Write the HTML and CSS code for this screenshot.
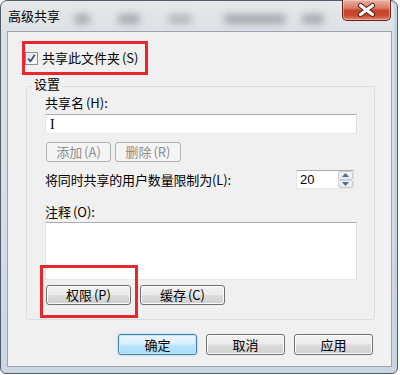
FILE: index.html
```html
<!DOCTYPE html>
<html lang="zh-CN">
<head>
<meta charset="utf-8">
<title>高级共享</title>
<link rel="stylesheet" href="styles.css">
</head>
<body>
<div class="window">
  <div class="titlebar">
    <span class="title">高级共享</span>
    <span class="glass g1"></span>
    <span class="glass g2"></span>
    <span class="glass g3"></span>
    <span class="glass g4"></span>
    <span class="glass g5"></span>
    <button class="close" type="button" aria-label="关闭">
      <svg width="47" height="20" viewBox="0 0 47 20">
        <path d="M17.5 5.5 L29.5 14.5 M29.5 5.5 L17.5 14.5" stroke="#5a2014" stroke-width="5.2" stroke-linecap="round" fill="none"/>
        <path d="M17.5 5.5 L29.5 14.5 M29.5 5.5 L17.5 14.5" stroke="#ffffff" stroke-width="3.2" stroke-linecap="round" fill="none"/>
      </svg>
    </button>
  </div>
  <div class="client">
    <label class="share-check">
      <span class="checkbox">
        <svg width="11" height="11" viewBox="0 0 11 11">
          <path d="M2.2 5.6 L4.4 8.4 L8.8 1.8" stroke="#3b4f8a" stroke-width="1.8" fill="none" stroke-linejoin="round"/>
        </svg>
      </span>
      <span class="check-text">共享此文件夹 (S)</span>
    </label>
    <fieldset class="settings">
      <legend class="settings-title">设置</legend>
      <div class="field-label">共享名 (H):</div>
      <div class="textbox"><span class="share-name">I</span></div>
      <div class="btn-row add-row">
        <button class="btn disabled add" type="button">添加 (A)</button>
        <button class="btn disabled remove" type="button">删除 (R)</button>
      </div>
      <div class="limit-row">
        <span class="limit-label">将同时共享的用户数量限制为(L):</span>
        <div class="spin">
          <span class="spin-value">20</span>
          <div class="spin-btns">
            <span class="spin-btn">
              <svg width="7" height="4" viewBox="0 0 7 4"><path d="M0 4 L3.5 0 L7 4 Z" fill="#4c6a92"/></svg>
            </span>
            <span class="spin-btn">
              <svg width="7" height="4" viewBox="0 0 7 4"><path d="M0 0 L7 0 L3.5 4 Z" fill="#4c6a92"/></svg>
            </span>
          </div>
        </div>
      </div>
      <div class="field-label comment-label">注释 (O):</div>
      <div class="textarea"></div>
      <div class="btn-row perm-row">
        <div class="perm-wrap">
          <button class="btn perm" type="button">权限 (P)</button>
          <span class="annot"></span>
        </div>
        <button class="btn cache" type="button">缓存 (C)</button>
      </div>
    </fieldset>
    <div class="dialog-buttons">
      <button class="btn dlg default" type="button">确定</button>
      <button class="btn dlg" type="button">取消</button>
      <button class="btn dlg" type="button">应用</button>
    </div>
  </div>
</div>
</body>
</html>
```

FILE: styles.css
```css
* {
  box-sizing: border-box;
}

html,
body {
  margin: 0;
  padding: 0;
  background: #ffffff;
}

body {
  width: 400px;
  height: 375px;
  overflow: hidden;
  font-family: "Noto Sans CJK SC", "Microsoft YaHei", "Noto Sans", sans-serif;
  font-size: 13px;
  color: #111111;
}

.window {
  width: 398px;
  height: 374px;
  border: 1px solid #505e6c;
  border-radius: 7px 7px 6px 6px;
  background: linear-gradient(to bottom, #e6e8ea 0, #dde1e5 30px, #d5dde5 60%, #cad6e2 100%);
  padding: 0 5px 6px 6px;
  display: flex;
  flex-direction: column;
  box-shadow: inset -3px 0 0 #c3d3e4;
}

.titlebar {
  height: 30px;
  flex: none;
  display: flex;
  align-items: flex-start;
}

.title {
  line-height: 30px;
  padding-left: 1px;
  color: #000000;
  font-size: 13px;
}

.glass {
  display: block;
  height: 10px;
  margin-top: 13px;
  background: rgba(90, 96, 104, 0.42);
  filter: blur(3.5px);
  border-radius: 4px;
}

.g1 { width: 16px; margin-left: 14px; }
.g2 { width: 22px; margin-left: 28px; }
.g3 { width: 24px; margin-left: 28px; opacity: 0.75; }
.g4 { width: 62px; margin-left: 32px; }
.g5 { width: 22px; margin-left: 16px; }

.close {
  margin-left: auto;
  margin-right: 1px;
  margin-top: -1px;
  width: 49px;
  height: 21px;
  padding: 0;
  border: 1px solid #5e2418;
  border-top: none;
  border-radius: 0 0 5px 5px;
  background: linear-gradient(to bottom, #eab0a3 0%, #dc7c67 40%, #c8432b 52%, #c94a30 78%, #df8a72 100%);
  box-shadow: inset 0 0 0 1px rgba(255, 220, 210, 0.45);
  display: flex;
  align-items: center;
  justify-content: center;
}

.client {
  flex: 1;
  border: 1px solid #98a4b0;
  background: #f0f0f0;
  display: flex;
  flex-direction: column;
  align-items: flex-start;
}

.share-check {
  margin: 9px 0 0 14px;
  width: 126px;
  height: 34px;
  border: 3px solid #e6282e;
  display: flex;
  align-items: center;
  gap: 4px;
  color: #000000;
}

.checkbox {
  width: 13px;
  height: 13px;
  border: 1px solid #8e8f8f;
  background: linear-gradient(135deg, #d9dadb 0%, #f6f6f6 60%, #ffffff 100%);
  box-shadow: inset 0 0 0 1px #f3f3f3;
  display: flex;
  align-items: center;
  justify-content: center;
}

.check-text {
  line-height: 14px;
  white-space: nowrap;
  word-spacing: -1px;
}

.settings {
  align-self: stretch;
  margin: 2px 16px 0 18px;
  border: 1px solid #d5dfe5;
  border-radius: 3px;
  padding: 0 17px 14px 18px;
  min-width: 0;
  display: flex;
  flex-direction: column;
}

.settings-title {
  line-height: 14px;
  padding: 0 2px 5px;
  margin-left: -13px;
  color: #000000;
}

.field-label {
  line-height: 14px;
  color: #000000;
  word-spacing: -1px;
}

.textbox {
  margin-top: 4px;
  height: 20px;
  border: 1px solid;
  border-color: #abadb3 #dbdfe6 #e3e9ef #e2e3ea;
  background: #ffffff;
  padding-left: 4px;
  line-height: 18px;
}

.share-name {
  font-family: "Liberation Serif", "DejaVu Serif", serif;
  font-size: 14px;
  color: #000000;
}

.btn-row {
  display: flex;
}

.add-row {
  margin-top: 8px;
  gap: 4px;
}

.btn {
  height: 20px;
  padding: 0;
  font-family: inherit;
  font-size: 13px;
  line-height: 18px;
  color: #000000;
  border: 1px solid #707070;
  border-radius: 3px;
  background: linear-gradient(to bottom, #f2f2f2 0%, #ebebeb 48%, #dddddd 52%, #cfcfcf 100%);
  box-shadow: inset 0 0 0 1px #fbfbfb;
  white-space: nowrap;
  word-spacing: -1px;
}

.btn.disabled {
  color: #8d8d8d;
  border-color: #adb2b5;
  background: #f4f4f4;
  box-shadow: none;
}

.add {
  width: 65px;
  margin-left: 1px;
}

.remove {
  width: 66px;
}

.limit-row {
  margin-top: 8px;
  display: flex;
  align-items: center;
}

.limit-label {
  line-height: 14px;
  color: #000000;
  white-space: nowrap;
  letter-spacing: -0.15px;
}

.spin {
  margin-left: auto;
  margin-right: 3px;
  width: 58px;
  height: 19px;
  border: 1px solid;
  border-color: #abadb3 #dbdfe6 #e3e9ef #e2e3ea;
  background: #ffffff;
  display: flex;
}

.spin-value {
  flex: 1;
  padding-left: 3px;
  line-height: 17px;
  font-family: "Liberation Sans", Arial, sans-serif;
  font-size: 13px;
  color: #000000;
}

.spin-btns {
  width: 15px;
  display: flex;
  flex-direction: column;
}

.spin-btn {
  flex: 1;
  display: flex;
  align-items: center;
  justify-content: center;
  border: 1px solid #c8cdd4;
  border-radius: 2px;
  background: linear-gradient(to bottom, #f5f6f7 0%, #e6e9ed 100%);
}

.comment-label {
  margin-top: 16px;
}

.textarea {
  margin-top: 3px;
  height: 58px;
  border: 1px solid;
  border-color: #abadb3 #dbdfe6 #e3e9ef #e2e3ea;
  background: #ffffff;
}

.perm-row {
  margin-top: 5px;
  gap: 9px;
}

.perm-wrap {
  position: relative;
  margin-left: 1px;
  display: flex;
}

.perm,
.cache {
  width: 85px;
}

.annot {
  position: absolute;
  left: -6px;
  top: -20px;
  width: 98px;
  height: 53px;
  border: 3px solid #e6282e;
  pointer-events: none;
}

.dialog-buttons {
  align-self: stretch;
  margin-top: 14px;
  padding-right: 18px;
  display: flex;
  justify-content: flex-end;
  gap: 9px;
}

.dlg {
  width: 79px;
  height: 21px;
  line-height: 19px;
}

.dlg.default {
  border-color: #3c7fb1;
  background: linear-gradient(to bottom, #eaf6fd 0%, #d9f0fc 48%, #bee6fd 52%, #a7d9f5 100%);
  box-shadow: inset 0 0 0 1px #c9ecfd, 0 0 2px rgba(70, 160, 220, 0.6);
}
```
